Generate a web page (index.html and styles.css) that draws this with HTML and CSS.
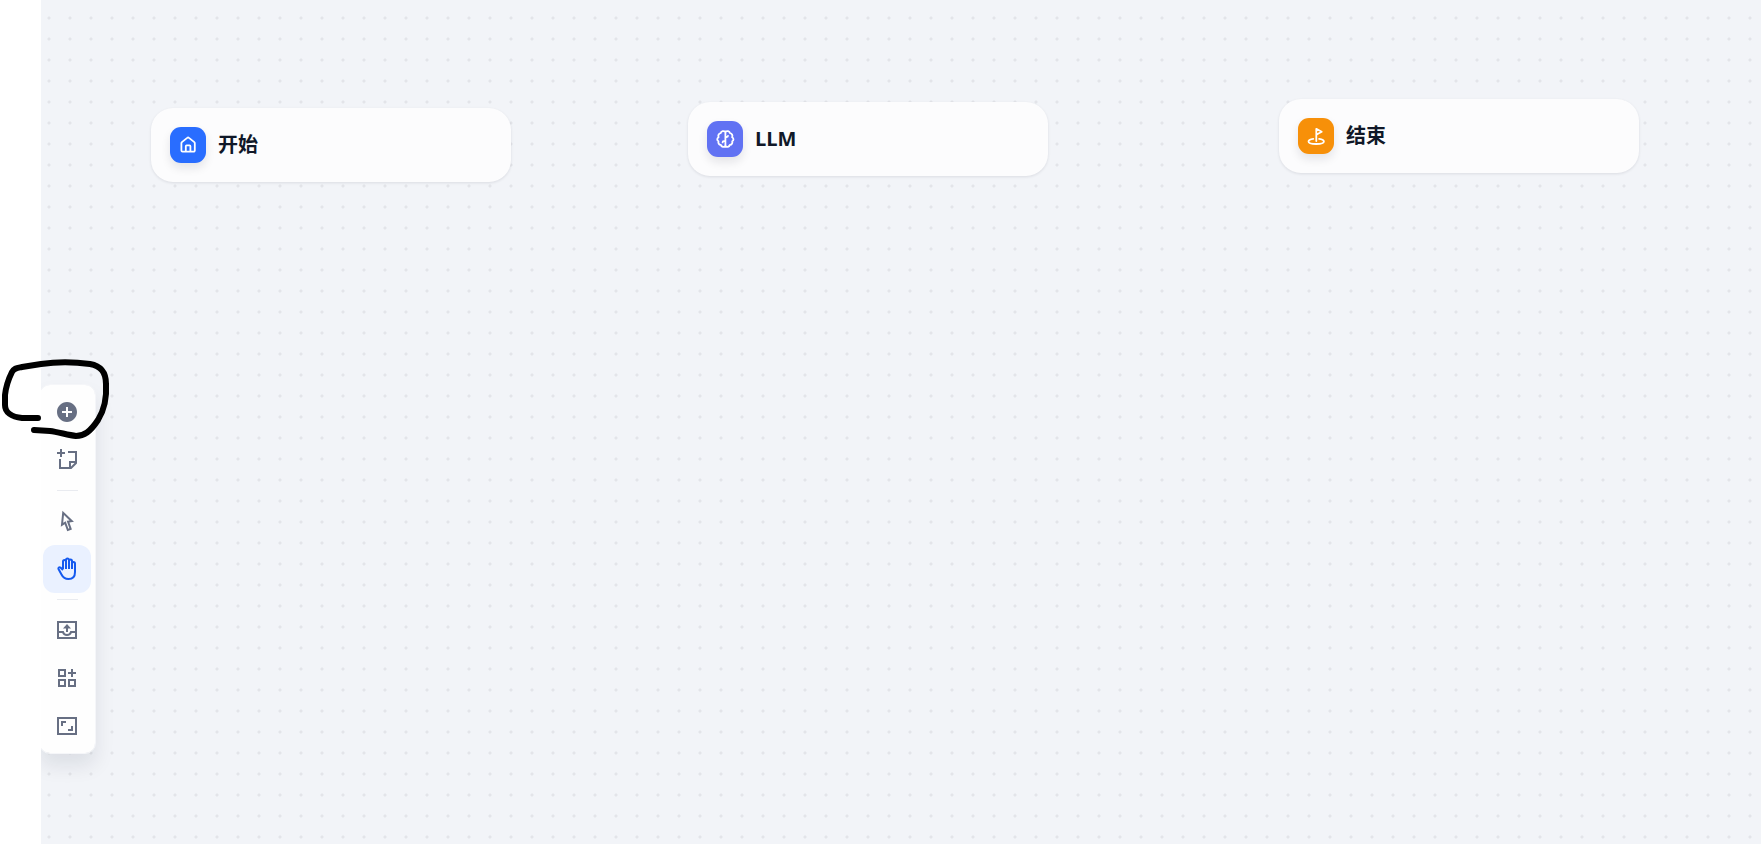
FILE: index.html
```html
<!DOCTYPE html>
<html lang="zh-CN">
<head>
    <meta charset="UTF-8">
    <meta name="viewport" content="width=device-width, initial-scale=1.0">
    <title>工作流</title>
    <link rel="stylesheet" href="styles.css">
</head>
<body>
    <div class="workspace">
        <aside class="sidebar"></aside>

        <main class="canvas">
            <section class="node node-start">
                <span class="node-icon">
                    <svg viewBox="0 0 20 20"><path d="M3.4 8.2v7.2a1.2 1.2 0 0 0 1.2 1.2h11a1.2 1.2 0 0 0 1.2-1.2V8.2a1.4 1.4 0 0 0-.5-1.1L11 2.9a1.4 1.4 0 0 0-1.8 0L3.9 7.1a1.4 1.4 0 0 0-.5 1.1zM7.8 16.4v-5.2a.8.8 0 0 1 .8-.8h3a.8.8 0 0 1 .8.8v5.2"/></svg>
                </span>
                <h2>开始</h2>
            </section>

            <section class="node node-llm">
                <span class="node-icon">
                    <svg viewBox="0 0 20 20"><path d="M10.4 2.4v15.4M10.4 3C9 1.5 6 2 5.7 4.2 3.6 4.6 2.8 6.6 3.6 8.200 1.800 9.200 1.800 11.500 3.500 12.300 2.900 14 4 15.700 5.800 15.900 6.500 18 9 18.400 10.400 17M10.400 3c1.400-1.500 4.200-1 4.600 1.200 2.100.4 2.900 2.400 2.100 4 1.800 1 1.800 3.300.1 4.100.6 1.700-.5 3.400-2.300 3.600-.7 2.100-3.100 2.500-4.500 1.100M10.400 8h1.400a1.200 1.200 0 0 0 1.200-1.200M10.400 12.200H8.800a1.200 1.200 0 0 0-1.200 1.200"/></svg>
                </span>
                <h2>LLM</h2>
            </section>

            <section class="node node-end">
                <span class="node-icon">
                    <svg viewBox="0 0 20 20"><path d="M10.3 15V2.800l5.400 3-5.400 3M7.300 12.900c-2.800.4-4.800 1.300-4.800 2.600 0 1.500 3.400 2.500 7.700 2.500s7.700-1 7.700-2.500c0-1.300-2-2.200-4.800-2.600"/></svg>
                </span>
                <h2>结束</h2>
            </section>

            <nav class="toolbar" aria-label="画布工具">
                <button type="button" aria-label="添加节点">
                    <svg class="solid" viewBox="0 0 24 24"><path d="M12 22C6.477 22 2 17.523 2 12S6.477 2 12 2s10 4.477 10 10-4.477 10-10 10zm-1-11H7v2h4v4h2v-4h4v-2h-4V7h-2v4z"/></svg>
                </button>
                <button type="button" aria-label="添加注释">
                    <svg viewBox="0 0 24 24"><path d="M6 1v8M2 5h8M13 4h8v11l-5 5H5v-9M15 20v-6h6"/></svg>
                </button>
                <hr>
                <button type="button" aria-label="指针模式">
                    <svg class="solid" viewBox="1 0 24 24"><path d="M15.387 13.498L17.940 20.512L13.242 22.222L10.689 15.208L6.790 17.653L8.409 1.633L19.946 12.865L15.387 13.498ZM15.377 19.316L12.662 11.857L15.621 11.446L9.982 5.956L9.191 13.786L11.722 12.199L14.437 19.658L15.377 19.316Z"/></svg>
                </button>
                <button type="button" class="active" aria-label="手模式">
                    <svg viewBox="0 0 24 24"><path d="M8 12V4.500a1.500 1.500 0 0 1 3 0M11 12V3a1.500 1.500 0 0 1 3 0v9M14 4a1.500 1.500 0 0 1 3 0v8M17 6.500a1.500 1.500 0 0 1 3 0V15c0 4.500-2.500 7-6.500 7-3.500 0-5.500-1.500-7-4.500l-3-5.500c-.6-1.300.8-2.300 2-1.500L8 13"/></svg>
                </button>
                <hr>
                <button type="button" aria-label="导入应用">
                    <svg viewBox="0 0 24 24"><path d="M3 4h18v16H3zM3 14h5c.5 2 2 3 4 3s3.500-1 4-3h5M12 14V8"/><path class="solid" d="M12 6l4 4.500H8z"/></svg>
                </button>
                <button type="button" aria-label="整理节点">
                    <svg viewBox="0 0 24 24"><path d="M4 4h6v6H4zM4 14h6v6H4zM14 14h6v6h-6zM17 3v8M13 7h8"/></svg>
                </button>
                <button type="button" aria-label="适应视图">
                    <svg viewBox="0 0 24 24"><path d="M3 4h18v16H3zM7 12V8h4M17 12v4h-4"/></svg>
                </button>
            </nav>
        </main>

        <svg class="scribble" viewBox="0 0 120 100"><path d="M38 68H22C11 67 5 62 5 55V45C6 36 9 28 12 22 14 18 17 18 22 17L41 14C55 12 75 12 90 14 101 16 106 22 106 34 107 50 103 62 98 70 90 82 84 86 76 86 68 85 58 82 50 81L34 80"/></svg>
    </div>
</body>
</html>
```

FILE: styles.css
```css
body {
    margin: 0;
    font-family: "Open Sans", "Noto Sans CJK SC", sans-serif;
    background: #fff;
    color: #101828;
}
.workspace {
    position: relative;
    display: flex;
    min-height: 100vh;
}
.sidebar {
    flex: 0 0 41px;
    background: #fff;
}
.canvas {
    position: relative;
    flex: 1;
    overflow: hidden;
    background-color: #f2f4f8;
    background-image: radial-gradient(circle at 10px 10px, #e3e4e9 1px, transparent 2px);
    background-size: 21px 21px;
    background-position: -2px 8px;
}
svg {
    fill: none;
    stroke: currentColor;
}
.solid {
    fill: currentColor;
    stroke: none;
}

/* nodes */
.node {
    position: absolute;
    display: flex;
    align-items: center;
    gap: 12px;
    box-sizing: border-box;
    width: 360px;
    padding: 19px;
    border-radius: 22px;
    background: #fcfcfd;
    box-shadow: 0 1px 3px rgba(16, 24, 40, 0.1);
}
.node-start {
    left: 110px;
    top: 108px;
}
.node-llm {
    left: 647px;
    top: 102px;
}
.node-end {
    left: 1238px;
    top: 99px;
}
.node h2 {
    margin: 0;
    font-size: 20px;
    line-height: 24px;
    font-weight: 700;
}
.node-icon {
    display: flex;
    align-items: center;
    justify-content: center;
    width: 36px;
    height: 36px;
    border-radius: 11px;
    color: #fff;
    box-shadow: 0 5px 10px rgba(16, 24, 40, 0.1);
}
.node-icon svg {
    width: 20px;
    height: 20px;
    stroke-width: 1.8;
    stroke-linecap: round;
    stroke-linejoin: round;
}
.node-start .node-icon {
    background: #296dff;
}
.node-llm .node-icon {
    background: #6172f3;
}
.node-end .node-icon {
    background: #f79009;
}

/* toolbar */
.toolbar {
    position: absolute;
    left: -2px;
    top: 384px;
    display: flex;
    flex-direction: column;
    align-items: center;
    padding: 3px 4px 3px 3px;
    border: 1px solid #f5f6f9;
    border-radius: 11px;
    background: #fefefe;
    background-clip: padding-box;
    box-shadow: 0 12px 20px rgba(16, 24, 40, 0.09);
}
.toolbar button {
    display: flex;
    align-items: center;
    justify-content: center;
    width: 48px;
    height: 48px;
    padding: 0;
    border: none;
    border-radius: 12px;
    background: none;
    color: #676f83;
    cursor: pointer;
}
.toolbar .active {
    background: #eaf1ff;
    color: #155aef;
}
.toolbar svg {
    width: 24px;
    height: 24px;
    stroke-width: 2;
}
.toolbar hr {
    width: 21px;
    height: 1px;
    margin: 6px 0;
    border: none;
    background: #e9ebf0;
}

/* pen mark around the add button */
.scribble {
    position: absolute;
    left: 0;
    top: 350px;
    width: 120px;
    height: 100px;
    color: #000;
    stroke-width: 6;
    stroke-linecap: round;
    stroke-linejoin: round;
    pointer-events: none;
}
```
